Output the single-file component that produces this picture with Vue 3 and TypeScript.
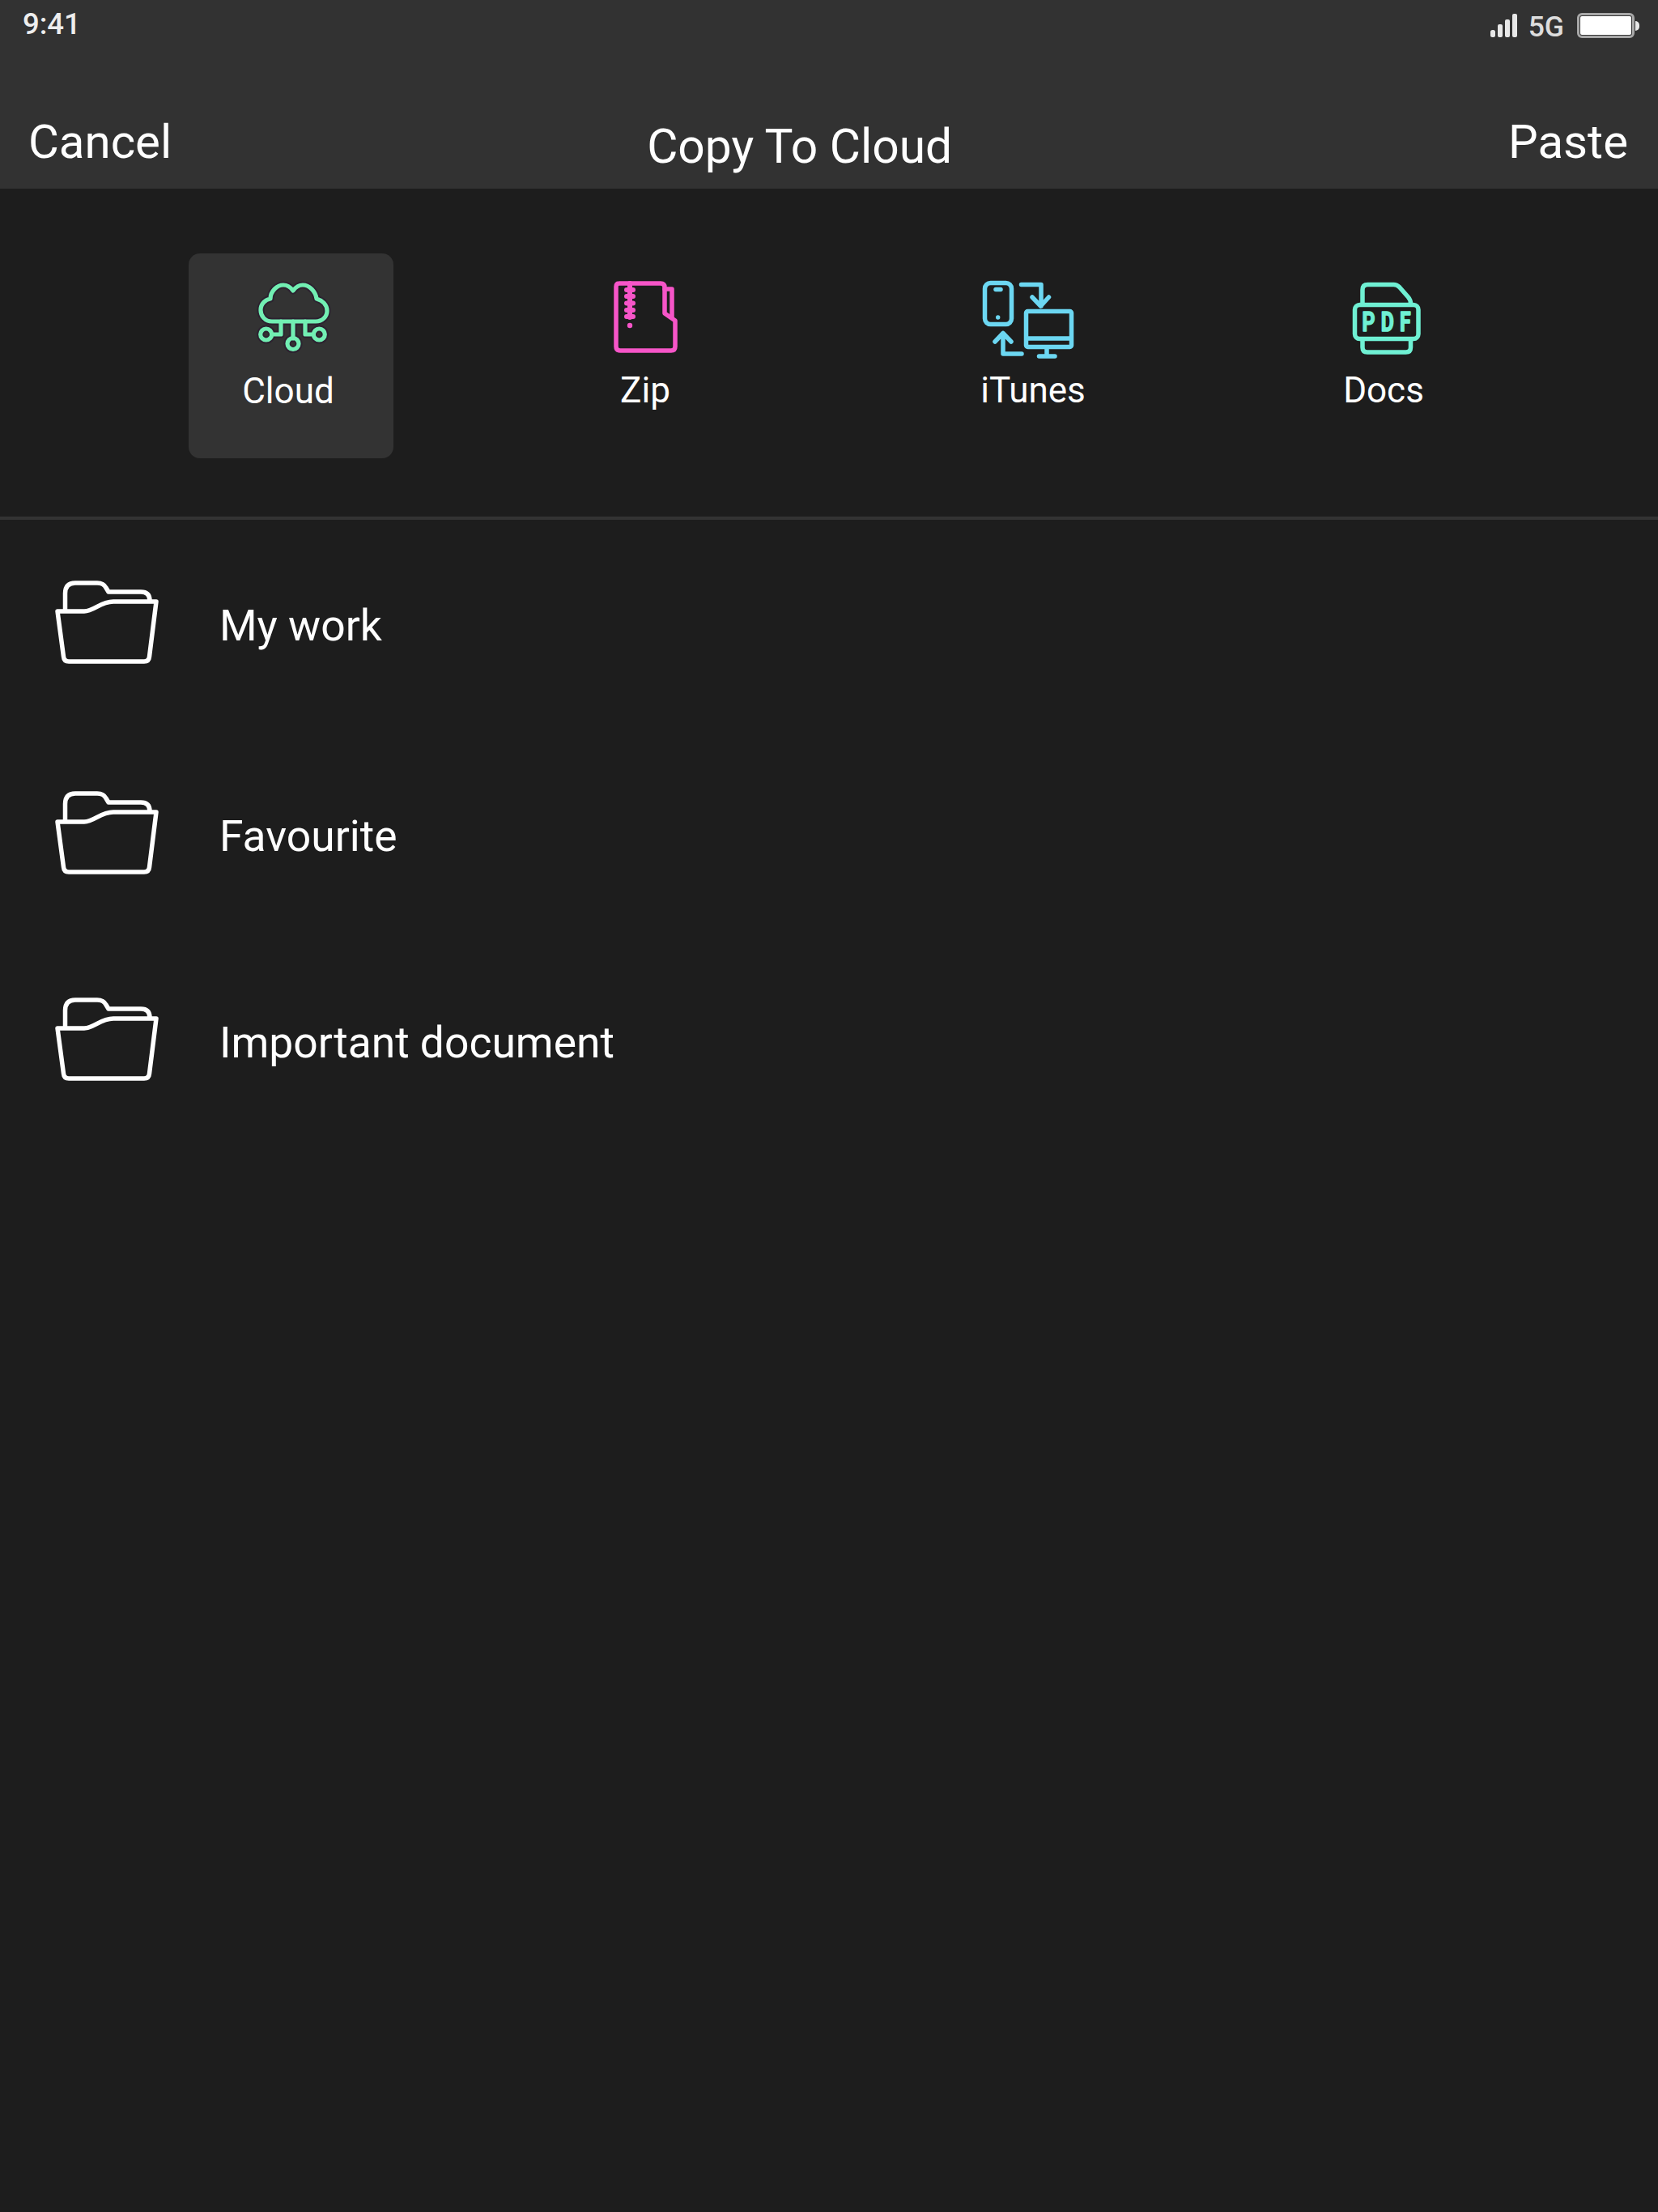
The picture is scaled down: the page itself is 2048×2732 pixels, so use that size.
<script setup lang="ts">
const rows: { name: string }[] = [
  { name: 'My work' },
  { name: 'Favourite' },
  { name: 'Important document' }
]
</script>

<template>
  <div class="page">
    <header class="head">
      <div class="status">
        <span class="time">9:41</span>
        <div class="status-right">
          <svg class="signal" width="34" height="30" viewBox="0 0 34 30">
            <rect x="0" y="21" width="6" height="9" rx="2.500" />
            <rect x="9" y="14" width="6" height="16" rx="2" />
            <rect x="18" y="8" width="6" height="22" rx="2" />
            <rect x="27" y="1" width="6" height="29" rx="2" />
          </svg>
          <span class="net">5G</span>
          <div class="battery"><div class="battery-fill"></div></div>
          <div class="nub"></div>
        </div>
      </div>
      <nav class="nav">
        <span class="nav-btn">Cancel</span>
        <span class="title">Copy To Cloud</span>
        <span class="nav-btn paste">Paste</span>
      </nav>
    </header>

    <section class="tabs">
      <div class="tab tab-cloud">
        <svg class="icon" width="140" height="120" viewBox="72 30 140 120" fill="none" stroke-linecap="round" stroke-linejoin="round">
          <g stroke="#2c2230" stroke-width="9">
            <path d="M116 97C107 97 102 90 102 83C102 75 108 70 114 69C114 60 122 52 130 52C135 52 139 55 142 59C145 55 149 52 154 52C162 52 170 60 171 69C178 71 184 76 184 84C184 91 178 97 170 97Z" />
            <path d="M142 97V118M116 113H127V97M167 113H157V97" />
            <circle cx="142" cy="124.500" r="7" />
            <circle cx="108.700" cy="113" r="7" />
            <circle cx="174.300" cy="113" r="7" />
          </g>
          <g stroke="#72efb3" stroke-width="5.200">
            <path d="M116 97C107 97 102 90 102 83C102 75 108 70 114 69C114 60 122 52 130 52C135 52 139 55 142 59C145 55 149 52 154 52C162 52 170 60 171 69C178 71 184 76 184 84C184 91 178 97 170 97Z" />
            <path d="M142 97V118M116 113H127V97M167 113H157V97" />
            <circle cx="142" cy="124.500" r="7" />
            <circle cx="108.700" cy="113" r="7" />
            <circle cx="174.300" cy="113" r="7" />
          </g>
        </svg>
        <span class="tab-label">Cloud</span>
      </div>
      <div class="tab tab-zip">
        <svg class="icon" width="140" height="120" viewBox="0 0 140 120" fill="none" stroke="#f655c8" stroke-width="5.500" stroke-linecap="round" stroke-linejoin="round">
          <path d="M35 20H86Q91 20 91 25V57L104 66V98Q104 103 99 103H36Q31 103 31 98V24Q31 20 35 20Z" />
          <path d="M91 27H100V62" />
          <path d="M48 20V62M44 28H52M44 36H52M44 44.500H52M44 53H52M44 61H52" stroke-width="6" />
          <circle cx="48" cy="72" r="3.200" fill="#f655c8" stroke="none" />
        </svg>
        <span class="tab-label">Zip</span>
      </div>
      <div class="tab tab-itunes">
        <svg class="icon" width="140" height="120" viewBox="0 0 140 120" fill="none" stroke="#6cd7f2" stroke-width="5.500" stroke-linecap="round" stroke-linejoin="round">
          <rect x="16.500" y="19.500" width="33" height="51" rx="7" />
          <path d="M30 27.500H36" />
          <circle cx="32.700" cy="62" r="2.700" fill="#6cd7f2" stroke="none" />
          <path d="M61.500 21.500H86V48M75 37L85.500 48L95.500 37" />
          <rect x="67.500" y="54.500" width="56" height="44" rx="2" />
          <path d="M68 88H123M93 99V110M83.500 110H103" />
          <path d="M62 107H39V82M29 92L39 81.500L49 92" />
        </svg>
        <span class="tab-label">iTunes</span>
      </div>
      <div class="tab tab-docs">
        <svg class="icon" width="140" height="120" viewBox="0 0 140 120" fill="none" stroke="#6ff0d3" stroke-width="5.500" stroke-linecap="round" stroke-linejoin="round">
          <path d="M42.500 45V28Q42.500 21.500 49 21.500H81Q85 21.500 88 24.500L99 37Q102 40.500 102 45" />
          <rect x="33" y="46.500" width="78.500" height="42" rx="6" />
          <path d="M42.500 90V99Q42.500 105 48.500 105H96Q102 105 102 99V90" />
          <text class="pdf" transform="translate(42 79) scale(0.75 1)" fill="#6ff0d3" stroke="#6ff0d3" stroke-width="1.600">PDF</text>
        </svg>
        <span class="tab-label">Docs</span>
      </div>
    </section>

    <div class="rule"></div>

    <ul class="list">
      <li v-for="row in rows" :key="row.name" class="row">
        <svg class="folder" width="160" height="150" viewBox="0 0 160 150" fill="none" stroke="#fff" stroke-width="5.500" stroke-linecap="round" stroke-linejoin="round">
          <path d="M30.500 64V43Q30.500 30 43 30H70Q78 30 81 36L84 41H124Q135 41 135 52" />
          <path d="M21 65H54C66 65 74 53 90 53H143L134.500 121Q134 127 128 127H35Q29 127 28.500 121Z" />
        </svg>
        <span class="row-name">{{ row.name }}</span>
      </li>
    </ul>
  </div>
</template>

<style scoped>
.page {
  width: 2048px;
  height: 2732px;
  background: #1d1d1d;
  color: #fff;
  font-family: Roboto, "Liberation Sans", sans-serif;
  overflow: hidden;
}
.head {
  height: 233px;
  background: #323232;
  display: flex;
  flex-direction: column;
}
.status {
  display: flex;
  justify-content: space-between;
  padding: 9px 23px 0 28px;
  height: 60px;
  box-sizing: border-box;
}
.time {
  font-size: 36.500px;
  line-height: 41px;
  font-weight: 500;
  color: #eee;
}
.status-right {
  display: flex;
  align-items: flex-start;
  padding-top: 7px;
}
.signal {
  fill: #e8e8e8;
}
.net {
  font-size: 35.500px;
  line-height: 40px;
  font-weight: 500;
  color: #ddd;
  margin: -3px 0 0 12.500px;
}
.battery {
  width: 71px;
  height: 31px;
  box-sizing: border-box;
  border: 3px solid #a8a8a8;
  border-radius: 6px;
  padding: 1px;
  margin-left: 16px;
}
.battery-fill {
  width: 100%;
  height: 100%;
  background: #fff;
  border-radius: 2px;
}
.nub {
  width: 5px;
  height: 12px;
  margin: 10px 0 0 1px;
  background: #e8e8e8;
  border-radius: 0 6px 6px 0;
}
.nav {
  display: flex;
  align-items: flex-start;
  padding: 81px 37px 0 35px;
}
.nav-btn {
  font-size: 58.200px;
  line-height: 68px;
}
.title {
  font-size: 58.700px;
  line-height: 68px;
  margin: 6px 0 0 587px;
}
.paste {
  margin-left: auto;
}
.tabs {
  display: flex;
  height: 405px;
  box-sizing: border-box;
  padding: 80px 0 0 233px;
}
.tab {
  width: 253px;
  height: 253px;
  box-sizing: border-box;
  padding-top: 17px;
  display: flex;
  flex-direction: column;
  align-items: center;
  border-radius: 14px;
}
.tab-cloud {
  background: #333;
}
.tab-zip {
  margin-left: 185.500px;
}
.tab-itunes {
  margin-left: 222px;
}
.tab-docs {
  margin-left: 183.500px;
}
.icon {
  display: block;
  flex: none;
}
.tab-cloud .icon {
  transform: translateX(2px);
}
.tab-zip .icon {
  transform: translateX(2px);
}
.tab-itunes .icon {
  transform: translateX(-3px);
}
.tab-docs .icon {
  transform: translateX(0.500px);
}
.tab-label {
  font-size: 44px;
  line-height: 56px;
  margin-top: 5px;
}
.tab-cloud .tab-label {
  transform: translateX(-3.500px);
}
.tab-zip .tab-label {
  transform: translate(-1px, -1px);
}
.tab-itunes .tab-label {
  transform: translate(3px, -1px);
}
.tab-docs .tab-label {
  transform: translate(-0.500px, -1px);
}
.pdf {
  font-family: Roboto, sans-serif;
  font-weight: 700;
  font-size: 33px;
  letter-spacing: 9.600px;
}
.rule {
  height: 4px;
  background: #333;
}
.list {
  list-style: none;
  margin: 0;
  padding: 0;
}
.row {
  display: flex;
  align-items: center;
  padding-left: 50px;
}
.row:nth-child(1) {
  margin-top: 48px;
}
.row:nth-child(2) {
  margin-top: 110px;
}
.row:nth-child(3) {
  margin-top: 105px;
}
.folder {
  display: block;
  flex: none;
}
.row-name {
  font-size: 53.400px;
  line-height: 64px;
  margin: 15px 0 0 61px;
}
</style>
